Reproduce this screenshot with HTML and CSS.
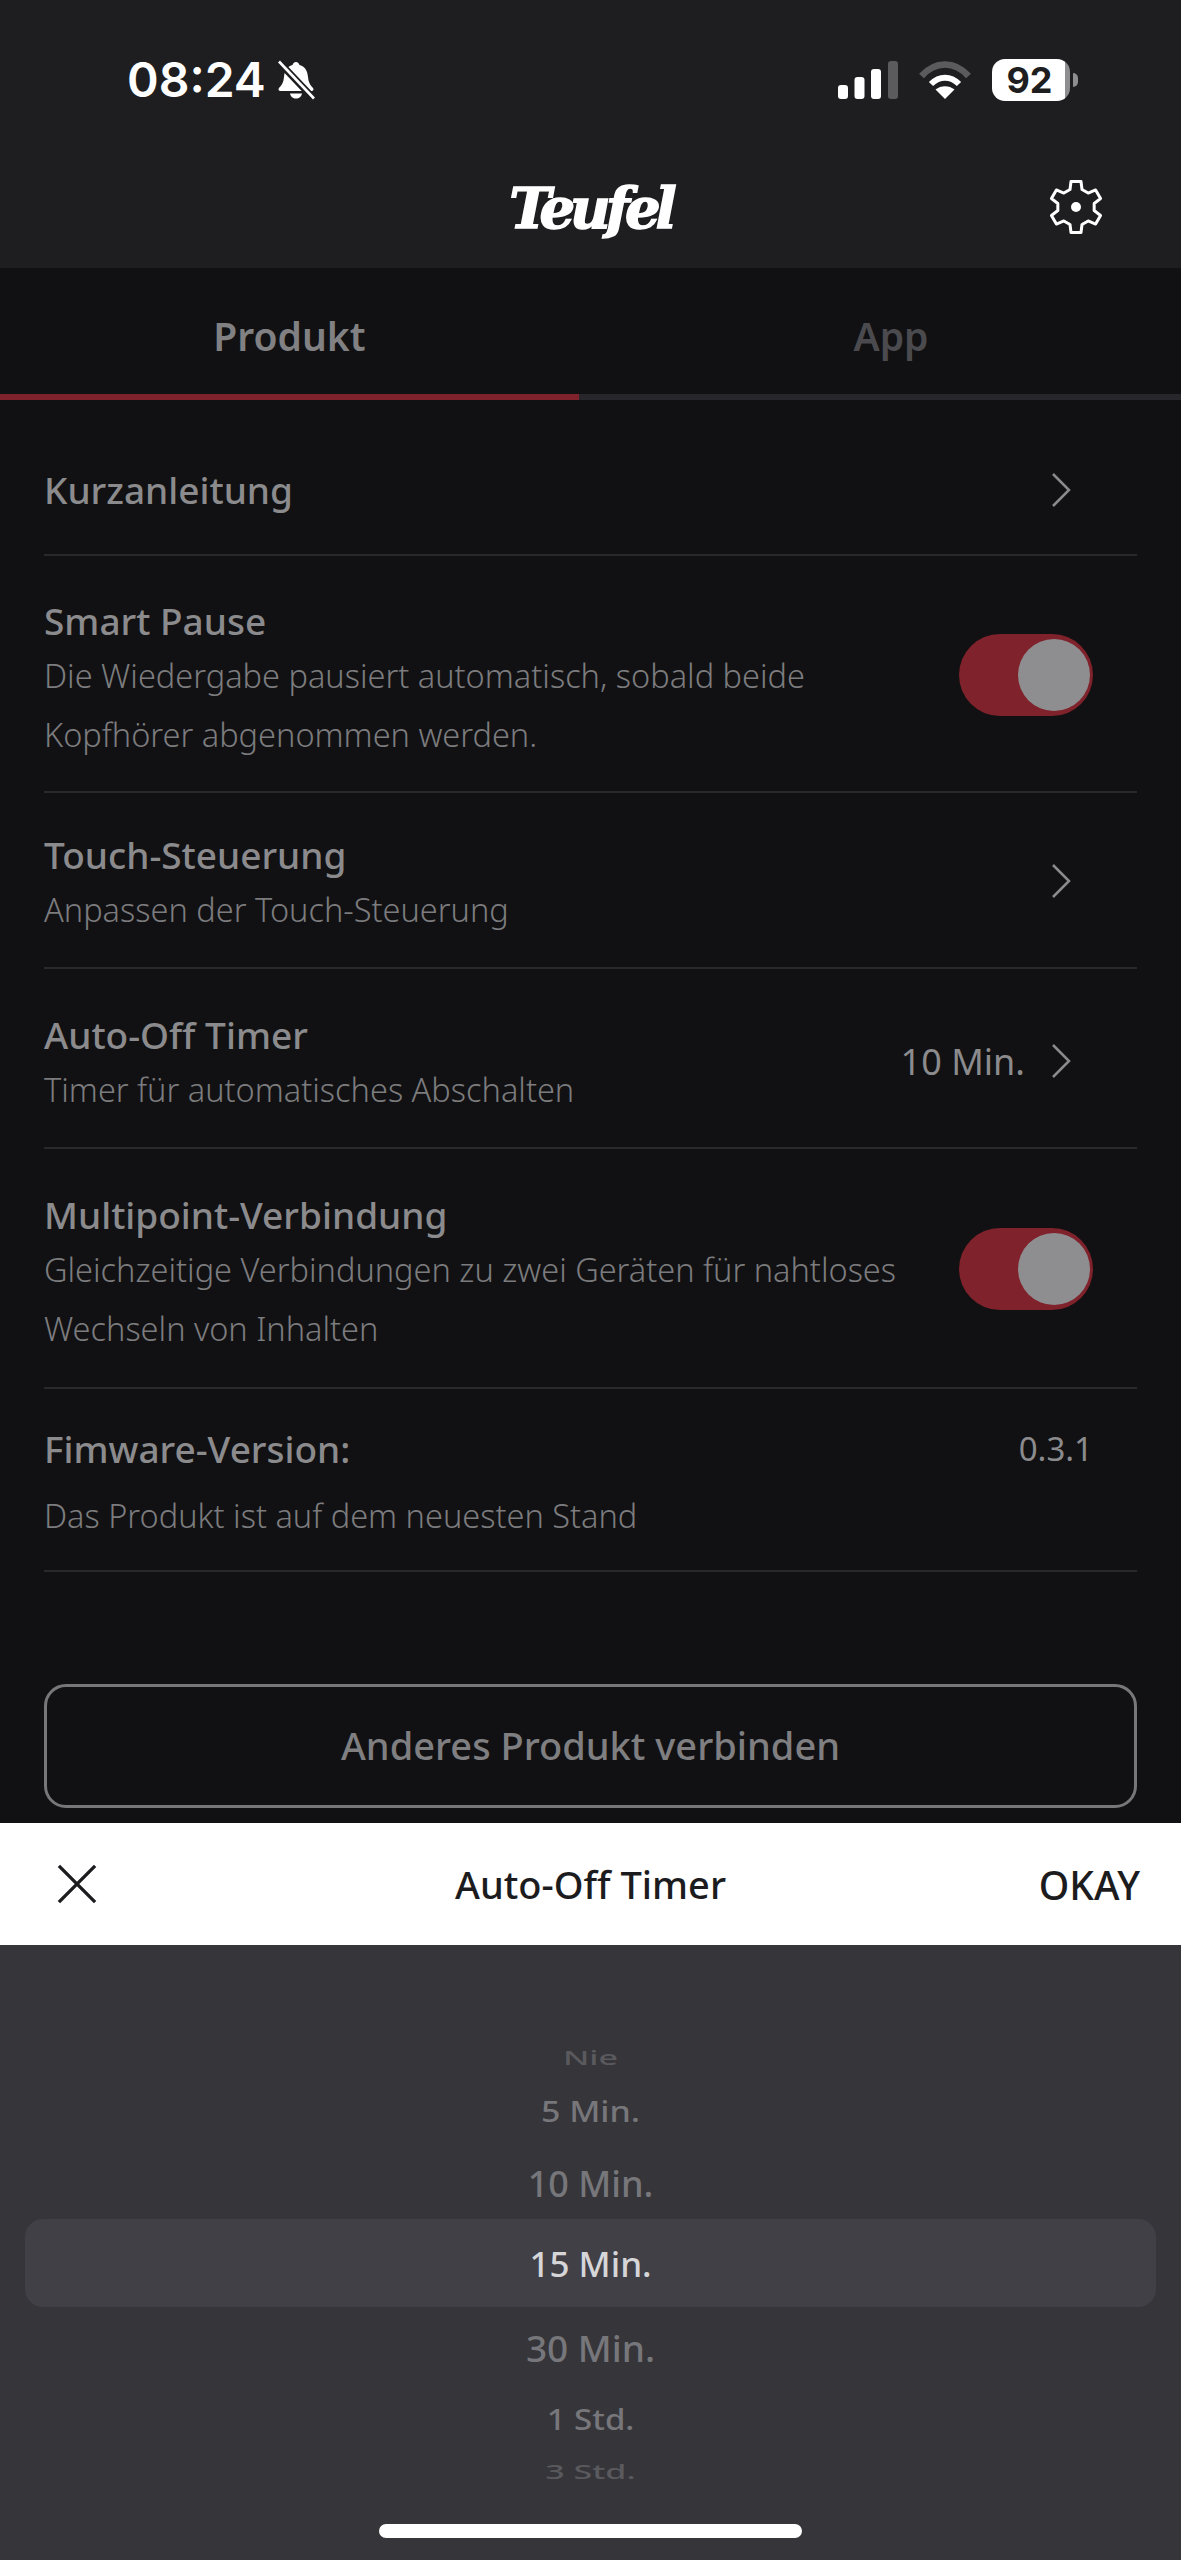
FILE: index.html
```html
<!DOCTYPE html>
<html lang="de">
<head>
  <meta charset="UTF-8">
  <title>Teufel</title>
  <link rel="stylesheet" href="styles.css">
</head>
<body>

  <div class="top">
    <div class="status">
      <span class="time">08:24</span>
      <svg class="bell" viewBox="0 0 38 40">
        <path d="M19 2c2 0 3 1.500 3.500 3 6 1.500 8 6.500 8.500 12 .4 5 2 8 5 11 1 1.500 .5 3-1.500 3H3.500C1.500 31 1 29.500 2 28c3-3 4.600-6 5-11 .5-5.500 2.500-10.500 8.500-12C16 3.500 17 2 19 2z" fill="#fff"/>
        <path d="M13 33.500h12c-.5 3-3 5-6 5s-5.500-2-6-5z" fill="#fff"/>
        <path d="M1 1l36 38" stroke="#1e1e20" stroke-width="7"/>
        <path d="M2 1.500l35 37" stroke="#fff" stroke-width="2.600"/>
      </svg>
      <div class="status-right">
        <svg class="signal" viewBox="0 0 60 38">
          <rect x="0" y="24" width="10" height="14" rx="3" fill="#fff"/>
          <rect x="16.500" y="16" width="10" height="22" rx="3" fill="#fff"/>
          <rect x="33" y="8" width="10" height="30" rx="3" fill="#fff"/>
          <rect x="50" y="0" width="10" height="38" rx="3" fill="#5b5b5d"/>
        </svg>
        <svg class="wifi" viewBox="0 0 54 38">
          <path d="M3.500 15C17-.5 37-.5 50.500 15" fill="none" stroke="#5b5b5d" stroke-width="6.500"/>
          <path d="M13 23c8.500-8.500 19.500-8.500 28 0" fill="none" stroke="#fff" stroke-width="6"/>
          <path d="M27 38l-9.500-9.500c5.500-4.500 13.500-4.500 19 0z" fill="#fff"/>
        </svg>
        <div class="battery">
          <div class="battery-body">92</div>
          <div class="battery-cap"></div>
        </div>
      </div>
    </div>
    <div class="nav">
      <span class="logo">Teufel</span>
      <svg class="gear" viewBox="0 0 56 56">
        <g transform="translate(28 28)">
          <polygon points="-6,-17.500 -5,-25.500 5,-25.500 6,-17.500 12.150,-13.960 19.600,-17.050 24.560,-8.450 18.170,-3.540 18.170,3.540 24.560,8.450 19.600,17.050 12.150,13.960 6,17.500 5,25.500 -5,25.500 -6,17.500 -12.150,13.960 -19.600,17.050 -24.560,8.450 -18.170,3.540 -18.170,-3.540 -24.560,-8.450 -19.600,-17.050 -12.150,-13.960" fill="none" stroke="#fff" stroke-width="3" stroke-linejoin="round"/>
          <circle r="5" fill="#fff"/>
        </g>
      </svg>
    </div>
  </div>

  <div class="content">
    <div class="tabs">
      <div class="tab tab-active">Produkt</div>
      <div class="tab">App</div>
    </div>

    <div class="list">
      <div class="row row-guide">
        <div class="row-text">
          <div class="row-title">Kurzanleitung</div>
        </div>
        <svg class="chevron" viewBox="0 0 20 36"><path d="M2 2l16 16L2 34"/></svg>
      </div>

      <div class="row row-pause">
        <div class="row-text">
          <div class="row-title">Smart Pause</div>
          <div class="row-sub">Die Wiedergabe pausiert automatisch, sobald beide<br>Kopfhörer abgenommen werden.</div>
        </div>
        <div class="toggle"><div class="knob"></div></div>
      </div>

      <div class="row row-touch">
        <div class="row-text">
          <div class="row-title">Touch-Steuerung</div>
          <div class="row-sub">Anpassen der Touch-Steuerung</div>
        </div>
        <svg class="chevron" viewBox="0 0 20 36"><path d="M2 2l16 16L2 34"/></svg>
      </div>

      <div class="row row-timer">
        <div class="row-text">
          <div class="row-title">Auto-Off Timer</div>
          <div class="row-sub">Timer für automatisches Abschalten</div>
        </div>
        <span class="row-value">10 Min.</span>
        <svg class="chevron" viewBox="0 0 20 36"><path d="M2 2l16 16L2 34"/></svg>
      </div>

      <div class="row row-multi">
        <div class="row-text">
          <div class="row-title">Multipoint-Verbindung</div>
          <div class="row-sub">Gleichzeitige Verbindungen zu zwei Geräten für nahtloses<br>Wechseln von Inhalten</div>
        </div>
        <div class="toggle"><div class="knob"></div></div>
      </div>

      <div class="row row-firmware">
        <div class="row-text">
          <div class="row-head">
            <div class="row-title">Fimware-Version:</div>
            <span class="row-version">0.3.1</span>
          </div>
          <div class="row-sub">Das Produkt ist auf dem neuesten Stand</div>
        </div>
      </div>
    </div>

    <div class="connect">Anderes Produkt verbinden</div>
  </div>

  <div class="sheet-bar">
    <svg class="close" viewBox="0 0 42 42"><path d="M2 2l38 38M40 2L2 40"/></svg>
    <span class="sheet-title">Auto-Off Timer</span>
    <span class="sheet-ok">OKAY</span>
  </div>

  <div class="picker">
    <div class="wheel wheel-nie"><span>Nie</span></div>
    <div class="wheel wheel-5"><span>5 Min.</span></div>
    <div class="wheel wheel-10"><span>10 Min.</span></div>
    <div class="wheel wheel-selected"><span>15 Min.</span></div>
    <div class="wheel wheel-30"><span>30 Min.</span></div>
    <div class="wheel wheel-1h"><span>1 Std.</span></div>
    <div class="wheel wheel-3h"><span>3 Std.</span></div>
    <div class="home-bar"></div>
  </div>

</body>
</html>
```

FILE: styles.css
```css
* {
  box-sizing: border-box;
}

body {
  margin: 0;
  width: 1181px;
  height: 2560px;
  overflow: hidden;
  display: flex;
  flex-direction: column;
  font-family: 'Noto Sans', 'Lato', sans-serif;
  background-color: #111113;
}

/* status bar + logo */
.top {
  height: 268px;
  background-color: #1e1e20;
}

.status {
  display: flex;
  align-items: center;
  height: 120px;
  padding: 39px 103px 0 127px;
}

.time {
  font-family: 'Inter', sans-serif;
  font-size: 48px;
  font-weight: 600;
  color: white;
}

.bell {
  width: 38px;
  height: 40px;
  margin-left: 11px;
}

.status-right {
  display: flex;
  align-items: center;
  margin-left: auto;
}

.signal {
  width: 60px;
  height: 38px;
}

.wifi {
  width: 54px;
  height: 38px;
  margin-left: 20px;
}

.battery {
  display: flex;
  align-items: center;
  margin-left: 20px;
}

.battery-body {
  width: 78px;
  height: 42px;
  border-radius: 13px;
  background: linear-gradient(90deg, white 93%, #8e8e90 93%);
  color: #1e1e20;
  font-family: 'Inter', sans-serif;
  font-size: 36px;
  font-weight: 700;
  line-height: 42px;
  text-align: center;
  padding-right: 3px;
}

.battery-cap {
  width: 5px;
  height: 14px;
  margin-left: 3px;
  border-radius: 0 5px 5px 0;
  background-color: #8e8e90;
}

.nav {
  position: relative;
  display: flex;
  justify-content: center;
  padding-top: 52px;
}

.logo {
  font-family: 'DejaVu Serif', serif;
  font-size: 56px;
  font-weight: bold;
  font-style: italic;
  letter-spacing: -5px;
  line-height: 72px;
  color: white;
  -webkit-text-stroke: 1.5px white;
}

.gear {
  position: absolute;
  right: 77px;
  top: 59px;
  width: 56px;
  height: 56px;
}

/* tabs */
.tabs {
  display: flex;
  height: 132px;
}

.tab {
  width: 50%;
  padding-top: 41px;
  text-align: center;
  font-size: 39px;
  font-weight: 600;
  color: #4b4b4f;
  border-bottom: 6px solid #27272b;
}

.tab-active {
  width: 579px;
  color: #818183;
  border-bottom-color: #7f222c;
}

.tab + .tab {
  flex: 1;
  padding-left: 22px;
}

/* rows */
.list {
  padding: 0 44px;
}

.row {
  display: flex;
  align-items: center;
  border-bottom: 2px solid #29292c;
}

.row-text {
  flex: 1;
}

.row-title {
  font-size: 37px;
  font-weight: 500;
  line-height: 50px;
  color: #8b8b8d;
}

.row-sub {
  font-size: 32.500px;
  font-weight: 300;
  line-height: 59px;
  color: #7c7c7e;
}

.row-guide {
  height: 156px;
  padding-top: 25px;
}

.row-pause {
  height: 237px;
  padding-top: 12px;
}

.row-touch {
  height: 176px;
  padding-top: 8px;
}

.row-touch .chevron {
  margin-bottom: 6px;
}

.row-timer {
  height: 180px;
  padding-top: 12px;
}

.row-timer .chevron,
.row-timer .row-value {
  margin-bottom: 6px;
}

.row-multi {
  height: 240px;
  padding-top: 11px;
}

.row-firmware {
  height: 183px;
  padding-top: 9px;
}

.row-head {
  display: flex;
  justify-content: space-between;
  padding: 0 44px 12px 0;
}

.row-version {
  font-size: 33px;
  line-height: 50px;
  color: #8b8b8d;
}

.row-value {
  font-size: 36px;
  color: #8b8b8d;
  margin-right: 26px;
}

.chevron {
  width: 20px;
  height: 36px;
  margin-right: 66px;
  fill: none;
  stroke: #8b8b8d;
  stroke-width: 2.500;
}

.toggle {
  width: 134px;
  height: 82px;
  margin-right: 44px;
  margin-bottom: 10px;
  padding: 5px 3px 5px 0;
  display: flex;
  justify-content: flex-end;
  border-radius: 41px;
  background-color: #7f222c;
}

.knob {
  width: 72px;
  height: 72px;
  border-radius: 50%;
  background-color: #8e8e90;
}

.connect {
  margin: 112px 44px 0;
  height: 124px;
  border: 3px solid #77777a;
  border-radius: 22px;
  text-align: center;
  font-size: 38px;
  font-weight: 500;
  line-height: 116px;
  color: #7f7f81;
}

/* bottom sheet */
.content {
  flex: 1;
}

.sheet-bar {
  position: relative;
  display: flex;
  justify-content: center;
  align-items: center;
  height: 122px;
  background-color: white;
}

.close {
  position: absolute;
  left: 57px;
  top: 41px;
  width: 40px;
  height: 40px;
  fill: none;
  stroke: #1c1c1e;
  stroke-width: 3.500;
}

.sheet-title {
  font-size: 38px;
  font-weight: 500;
  color: #1c1c1e;
}

.sheet-ok {
  position: absolute;
  right: 41px;
  font-size: 39px;
  font-weight: 500;
  color: #1c1c1e;
}

/* picker wheel */
.picker {
  height: 615px;
  padding-top: 95px;
  background-color: #36353a;
}

.wheel {
  display: flex;
  justify-content: center;
  align-items: center;
  font-weight: 500;
}

.wheel span {
  display: block;
}

.wheel-nie {
  height: 34px;
  font-size: 34px;
  color: #5a5a5e;
}

.wheel-nie span {
  transform: scaleY(0.6);
}

.wheel-5 {
  height: 74px;
  font-size: 34px;
  color: #77777b;
}

.wheel-5 span {
  transform: scaleY(0.85);
}

.wheel-10 {
  height: 71px;
  font-size: 36px;
  color: #77777b;
}

.wheel-selected {
  height: 88px;
  margin: 0 25px;
  font-size: 35px;
  color: #d6d6d9;
  border-radius: 18px;
  background-color: #414046;
}

.wheel-30 {
  height: 80px;
  font-size: 37px;
  color: #77777b;
}

.wheel-1h {
  height: 62px;
  font-size: 33px;
  color: #77777b;
}

.wheel-1h span {
  transform: scaleY(0.9);
}

.wheel-3h {
  height: 44px;
  font-size: 34px;
  color: #5a5a5e;
}

.wheel-3h span {
  transform: scaleY(0.6);
}

.home-bar {
  width: 423px;
  height: 14px;
  margin: 31px auto 0;
  border-radius: 7px;
  background-color: white;
}
```
